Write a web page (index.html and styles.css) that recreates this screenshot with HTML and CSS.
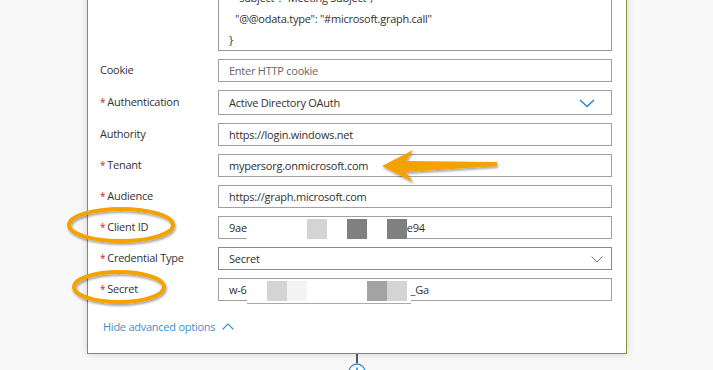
FILE: index.html
```html
<!DOCTYPE html>
<html>
<head>
<meta charset="utf-8">
<link rel="stylesheet" href="styles.css">
</head>
<body>
<div class="page">
  <div class="card">
    <div class="row row-body">
      <div class="label"></div>
      <div class="textarea">
        <div class="code-line indent">"subject": "Meeting Subject",</div>
        <div class="code-line indent">"@@odata.type": "#microsoft.graph.call"</div>
        <div class="code-line">}</div>
      </div>
    </div>
    <div class="row">
      <div class="label">Cookie</div>
      <div class="input placeholder">Enter HTTP cookie</div>
    </div>
    <div class="row">
      <div class="label"><span class="req">*</span>Authentication</div>
      <div class="input select tall"><span>Active Directory OAuth</span><svg class="chev-blue" width="16" height="9" viewBox="0 0 16 9"><path d="M1 1 L8 7.5 L15 1" fill="none" stroke="#2b88d8" stroke-width="1.6"/></svg></div>
    </div>
    <div class="row">
      <div class="label">Authority</div>
      <div class="input">https://login.windows.net</div>
    </div>
    <div class="row">
      <div class="label"><span class="req">*</span>Tenant</div>
      <div class="input">mypersorg.onmicrosoft.com</div>
    </div>
    <div class="row">
      <div class="label"><span class="req">*</span>Audience</div>
      <div class="input">https://graph.microsoft.com</div>
    </div>
    <div class="row">
      <div class="label"><span class="req">*</span>Client ID</div>
      <div class="input redacted"><span>9ae</span><span class="gap gap-client"><span class="blk b-light"></span><span class="sp"></span><span class="blk b-dark"></span><span class="sp"></span><span class="blk b-dark"></span></span><span>e94</span></div>
    </div>
    <div class="row">
      <div class="label"><span class="req">*</span>Credential Type</div>
      <div class="input select dark"><span>Secret</span><svg class="chev-gray" width="12" height="7" viewBox="0 0 12 7"><path d="M0.5 0.5 L6 6 L11.5 0.5" fill="none" stroke="#777" stroke-width="1"/></svg></div>
    </div>
    <div class="row">
      <div class="label"><span class="req">*</span>Secret</div>
      <div class="input redacted"><span>w-6</span><span class="gap gap-secret"><span class="sp s20"></span><span class="blk b-light"></span><span class="blk b-pale"></span><span class="sp s60"></span><span class="blk b-mid"></span><span class="blk b-light"></span></span><span>_Ga</span></div>
    </div>
    <div class="advanced">
      <span>Hide advanced options</span>
      <svg width="12" height="7" viewBox="0 0 12 7"><path d="M0.5 6.5 L6 1 L11.5 6.5" fill="none" stroke="#3a8fd8" stroke-width="1.1"/></svg>
    </div>
  </div>
  <div class="connector">
    <div class="line"></div>
    <div class="plus">
      <svg width="18" height="18" viewBox="0 0 18 18"><circle cx="9" cy="9" r="8" fill="#fff" stroke="#2b88d8" stroke-width="1.3"/><path d="M9 4.5 V13.5 M4.5 9 H13.5" stroke="#2b88d8" stroke-width="1.6"/></svg>
    </div>
  </div>
</div>
<svg class="annot" width="713" height="370" viewBox="0 0 713 370">
  <defs>
    <filter id="sh" x="-20%" y="-20%" width="140%" height="150%">
      <feDropShadow dx="1" dy="2" stdDeviation="1.3" flood-color="#000" flood-opacity="0.35"/>
    </filter>
  </defs>
  <ellipse cx="121" cy="225" rx="52" ry="16" fill="none" stroke="#f5a100" stroke-width="4" filter="url(#sh)"/>
  <ellipse cx="119" cy="287" rx="45" ry="15" fill="none" stroke="#f5a100" stroke-width="4" filter="url(#sh)"/>
  <polygon points="382,166 413,150 406,161 497,162 497,166 406,172 413,182" fill="#f5a100" filter="url(#sh)"/>
</svg>
</body>
</html>
```
FILE: styles.css
```css
html, body {
  margin: 0;
  padding: 0;
  background: #f8f8f8;
  overflow: hidden;
  height: 370px;
}
body {
  font-family: "Segoe UI", "Open Sans", "Noto Sans", sans-serif;
  font-size: 11px;
  letter-spacing: -0.25px;
  color: #323130;
}
.page {
  width: 713px;
  height: 370px;
  position: relative;
}
.card {
  margin-left: 87px;
  margin-top: -23px;
  background: #fff;
  border: 1px solid #7a9a3c;
  box-shadow: 0 0 7px rgba(0, 0, 0, 0.16);
  padding: 0 14px 19px 12px;
  box-sizing: border-box;
  width: 540px;
  display: flex;
  flex-direction: column;
  gap: 8px;
}
.row {
  display: grid;
  grid-template-columns: 118px 394px;
  align-items: center;
}
.row-body {
  align-items: start;
}
.label {
  color: #333;
  font-size: 11px;
  padding-bottom: 2px;
  white-space: nowrap;
}
.req {
  color: #c4262c;
  margin-right: 2px;
  font-size: 10px;
}
.textarea {
  border: 1px solid #999;
  border-top: none;
  padding: 0 10px 0 10px;
  height: 73px;
  box-sizing: border-box;
  display: flex;
  flex-direction: column;
  justify-content: flex-end;
}
.code-line {
  height: 21px;
  line-height: 21px;
  white-space: pre;
  color: #323130;
}
.indent {
  padding-left: 6px;
}
.input {
  height: 23px;
  box-sizing: border-box;
  border: 1px solid #a0a0a0;
  padding: 0 10px;
  display: flex;
  align-items: center;
  position: relative;
  white-space: nowrap;
}
.input.tall {
  height: 25px;
}
.input.dark {
  border-color: #8a8a8a;
}
.placeholder {
  color: #666;
}
.select svg {
  position: absolute;
  top: 50%;
}
.chev-blue {
  right: 16px;
  margin-top: -4px;
}
.chev-gray {
  right: 8px;
  margin-top: -3px;
}
.gap {
  display: flex;
  align-items: center;
  background: #fff;
  height: 22px;
  margin-bottom: -2px;
  padding-bottom: 2px;
  margin-top: 2px;
  box-sizing: border-box;
}
.gap-client {
  width: 160px;
  padding-left: 60px;
}
.gap-secret {
  width: 164px;
  padding-left: 0;
  box-shadow: 0 1px 0 #aaa;
}
.blk {
  display: block;
  width: 20px;
  height: 20px;
}
.sp {
  display: block;
  width: 20px;
  height: 20px;
}
.s20 { width: 20px; }
.s60 { width: 60px; }
.b-light { background: #d4d4d4; }
.b-dark { background: #808080; }
.b-mid { background: #a3a3a3; }
.b-pale { background: #f3f3f3; }
.advanced {
  margin-top: 10px;
  padding-left: 3px;
  color: #3a8fd8;
  font-size: 11px;
  display: flex;
  align-items: center;
  gap: 7px;
}
.connector {
  display: flex;
  flex-direction: column;
  align-items: center;
  width: 18px;
  margin-left: 348px;
}
.line {
  width: 2px;
  height: 9px;
  background: #555;
}
.plus {
  height: 18px;
}
.plus svg {
  display: block;
}
.annot {
  position: absolute;
  left: 0;
  top: 0;
  pointer-events: none;
}
```
